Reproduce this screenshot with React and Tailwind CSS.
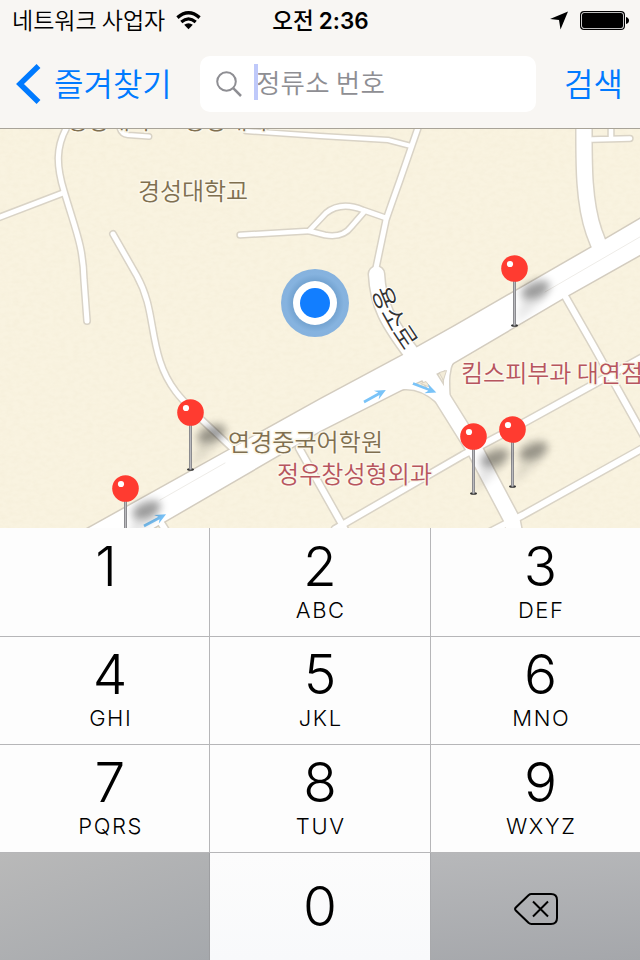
import React from 'react';

const keys = [
  { digit: '1', letters: '' },
  { digit: '2', letters: 'ABC' },
  { digit: '3', letters: 'DEF' },
  { digit: '4', letters: 'GHI' },
  { digit: '5', letters: 'JKL' },
  { digit: '6', letters: 'MNO' },
  { digit: '7', letters: 'PQRS' },
  { digit: '8', letters: 'TUV' },
  { digit: '9', letters: 'WXYZ' },
];

// Road geometry, in screen coordinates
const roads = [
  { d: 'M70 122 C54 146 57 168 64 191 C76 232 83 245 84 280 L87 321', w: 5 },
  { d: 'M-5 219 L63 193', w: 5 },
  { d: 'M119 122 Q119 134 128 135 L149 136.500', w: 4 },
  { d: 'M246 131 L320 136 L388 140 L411 146', w: 4 },
  { d: 'M420 122 L400 180 Q390 208 386 220 L376 268', w: 5 },
  { d: 'M240 235 L309 231 L326 213 Q341 201 363 210 L386 218', w: 4.500 },
  { d: 'M309 231 L325 235 Q343 238 351 227 L364 212', w: 4.500 },
  { d: 'M113 234 L137 276 C153 305 150 330 160 361 C168 386 180 398 202 420 L233 449', w: 5 },
  { d: 'M376.500 274 C378 305 388 322 412 354 L430 378 L475 450 L512 520 L515 535', w: 15 },
  { d: 'M584 120 C584 160 583 200 594 232 L602 253', w: 15 },
  { d: 'M611 120 L611 139 M592 139.500 L630 138.500', w: 4.500 },
  { d: 'M565 296 L593 345 L645 438', w: 6 },
  { d: 'M645 356 L527 421 L463 455 L335 529', w: 6 },
  { d: 'M645 447 L523 515 L490 532', w: 6 },
  { d: 'M299 448 L348 535', w: 6 },
  { d: 'M451 360 C446 370 446 380 447 396', w: 5 },
  { d: 'M395 388 Q418 382 438 400', w: 5 },
  { d: 'M158 518 L168 534', w: 6 },
];

const mainRoad =
  'M80 533 L320 399.500 L405 354 L455 326 L594 246 L645 216 V252 L565 297 L453 363 Q446 371 438 373 L407 387 L320 431 L160 524 L145 533 Z';

const pins = [
  [514.5, 268.5],
  [190.5, 412.5],
  [125.5, 488.5],
  [512.5, 429.5],
  [473.5, 436.5],
];

const arrows = [
  { x: 364, y: 402, r: -29 },
  { x: 413, y: 383.5, r: 21 },
  { x: 144, y: 526, r: -28 },
];

const StatusBar = () => (
  <div className="flex h-10 items-center pr-[11px] pl-3 text-[22.5px] text-black">
    <div className="flex flex-1 items-center">
      <span className="pb-0.5 text-[23px] font-[350] whitespace-nowrap">네트워크 사업자</span>
      <svg className="ml-[11px] h-[19px] w-[25px]" viewBox="0 0 26 19" fill="none" stroke="black">
        <path d="M1.500 6.500 Q13 -3.500 24.500 6.500" strokeWidth="3.500" />
        <path d="M5.500 11 Q13 4.500 20.500 11" strokeWidth="3.300" />
        <path d="M13 18.500 L8.500 14 Q13 10.500 17.500 14 Z" fill="black" stroke="none" />
      </svg>
    </div>
    <div className="font-medium whitespace-nowrap">
      오전 <span className="font-['Inter'] text-[22.5px] font-semibold">2:36</span>
    </div>
    <div className="flex flex-1 items-center justify-end gap-[12px]">
      <svg className="h-[19px] w-[18px]" viewBox="0 0 18 19">
        <path d="M18 0.500 L10.500 18.500 L9 9 L0 8 Z" />
      </svg>
      <svg className="h-[19px] w-[49px]" viewBox="0 0 49 19">
        <rect x="0.600" y="0.600" width="43.800" height="17.800" rx="3.500" fill="white" stroke="black" strokeWidth="1.200" />
        <rect x="2" y="2" width="41" height="15" rx="2" />
        <path d="M46 6 Q49 7 49 9.500 Q49 12 46 13 Z" />
      </svg>
    </div>
  </div>
);

const SearchBar = () => (
  <div className="flex h-[88px] items-start pt-4 text-[#007aff]">
    <button className="flex h-[56px] w-[200px] items-center pl-4">
      <svg className="h-[40px] w-[25px]" viewBox="0 0 25 40" fill="none" stroke="currentColor" strokeWidth="5.500">
        <path d="M22.500 2 L4 20 L22.500 38" />
      </svg>
      <span className="ml-[13px] pb-1 text-[32px] font-[350] whitespace-nowrap">즐겨찾기</span>
    </button>
    <div className="flex h-[56px] w-[336px] items-center rounded-[10px] bg-white pl-4">
      <svg className="h-[26px] w-[26px]" viewBox="0 0 26 26" fill="none" stroke="#8e8e93" strokeWidth="2">
        <circle cx="10.500" cy="10.500" r="9.300" />
        <path d="M17.200 17.200 L25 25" strokeWidth="2.500" />
      </svg>
      <div className="ml-3 h-9 w-1 -translate-y-[2px] bg-[#bfc9fa]" />
      <span className="-ml-0.5 pb-[5px] text-[26.5px] font-[350] tracking-[0.2px] whitespace-nowrap text-[#8e8e93]">정류소 번호</span>
    </div>
    <button className="ml-7 flex h-[56px] items-center pb-1 text-[32px] font-[350] whitespace-nowrap">검색</button>
  </div>
);

const Pin = ({ x, y }) => (
  <g transform={`translate(${x} ${y})`}>
    <path d="M1 56 L10 22 L34 16 L30 30 Z" fill="black" opacity="0.1" filter="url(#soft)" />
    <ellipse cx="21" cy="21" rx="15" ry="8" transform="rotate(-22 21 21)" fill="black" opacity="0.34" filter="url(#soft)" />
    <ellipse cx="0" cy="57" rx="3.500" ry="1.300" fill="#333" />
    <rect x="-1.500" y="12" width="3" height="45" fill="#8b8b8f" />
    <rect x="-0.500" y="12" width="1" height="45" fill="#b9b9bd" />
    <circle r="13.300" fill="#ff3b30" />
    <circle cx="-4.500" cy="-4.500" r="3.100" fill="white" />
  </g>
);

const MapView = () => (
  <svg className="block h-[399px] w-[640px]" viewBox="0 129 640 399">
    <defs>
      <filter id="soft" x="-50%" y="-50%" width="200%" height="200%">
        <feGaussianBlur stdDeviation="4" />
      </filter>
      <filter id="paper" x="0" y="0" width="100%" height="100%" colorInterpolationFilters="sRGB">
        <feTurbulence type="fractalNoise" baseFrequency="0.15 0.25" numOctaves="3" seed="4" />
        <feColorMatrix values="0 0 0 0 0.7  0 0 0 0 0.6  0 0 0 0 0.4  0.5 0 0 0 -0.17" />
      </filter>
      <radialGradient id="halo">
        <stop offset="0.600" stopColor="#6f9fcd" />
        <stop offset="0.850" stopColor="#86b3df" />
        <stop offset="1" stopColor="#86b2de" />
      </radialGradient>
      <path id="yongso" d="M372 291 Q380 318 409 358" />
    </defs>
    <rect y="128" width="640" height="400" fill="#f9f3e0" />
    <rect y="128" width="640" height="400" filter="url(#paper)" opacity="0.13" />

    <g fill="none" strokeLinecap="round" strokeLinejoin="round">
      {roads.map((road) => (
        <path key={road.d} d={road.d} stroke="#d9d3c6" strokeWidth={road.w + 3} />
      ))}
      <path d={mainRoad} stroke="#d3ccbf" strokeWidth="3" />
      {roads.map((road) => (
        <path key={road.d} d={road.d} stroke="white" strokeWidth={road.w} />
      ))}
      <path d={mainRoad} fill="white" />
      <path d="M645 234 L545 292 M225 463 L160 500" stroke="#eeece8" />
      {/* traffic islands at the junction */}
      <path d="M439.500 372.500 L446.500 370.500 L443.500 380 Z M421 383.500 L426 381.500 L430 387 Z" fill="#f3ecd8" stroke="#d9d2c4" />
    </g>

    {arrows.map((a) => (
      <g key={a.x} transform={`translate(${a.x} ${a.y}) rotate(${a.r})`} fill="#79c3f8">
        <path d="M0 -1.300 H17 L14 -5 L25 0 L14 5 L17 1.300 H0 Z" />
      </g>
    ))}

    <g
      className="font-['Noto_Sans_CJK_KR',sans-serif] text-[24px] font-[350]"
      stroke="#fbf7ea"
      strokeWidth="3"
      strokeLinejoin="round"
      paintOrder="stroke"
    >
      <g fill="#7f6f50">
        <text x="66" y="129" textLength="85">경성대학</text>
        <text x="183" y="129" textLength="107">경성대학교</text>
        <text x="138" y="199.500" textLength="110">경성대학교</text>
        <text x="228" y="450.500" textLength="155">연경중국어학원</text>
      </g>
      <g fill="#b7555e">
        <text x="277" y="482.500" textLength="155">정우창성형외과</text>
        <text x="461" y="381.500" textLength="182">킴스피부과 대연점</text>
      </g>
      <text className="text-[25px]" fill="#333" stroke="white" strokeWidth="2">
        <textPath href="#yongso">용소로</textPath>
      </text>
    </g>

    <circle cx="315" cy="303" r="34" fill="url(#halo)" />
    <circle cx="315" cy="303" r="22" fill="white" />
    <circle cx="315" cy="303" r="15" fill="#127eff" />

    {pins.map(([x, y]) => (
      <Pin key={x} x={x} y={y} />
    ))}
  </svg>
);

const Keypad = () => (
  <div className="grid grid-cols-[210px_221px_209px] grid-rows-[109px_108px_108px_107px] font-['Inter',sans-serif] font-light text-black">
    {keys.map((key, i) => (
      <button
        key={key.digit}
        className={`flex flex-col items-center border-b border-[#b6b6b8] bg-[#fdfdfd] ${i < 3 ? 'pt-[10px]' : 'pt-[9px]'} ${i % 3 === 2 ? 'pl-[10px]' : 'border-r'} ${i % 3 === 0 ? 'pl-[11px]' : ''}`}
      >
        <span className={`text-[55px] leading-[56px] ${i === 0 ? '-ml-2' : ''}`}>{key.digit}</span>
        <span className="mt-1 pl-[1.5px] text-[22px] leading-6 tracking-[1.6px]">{key.letters}</span>
      </button>
    ))}
    <div className="border-r border-[#9d9ea1] bg-linear-[160deg] from-[#b9b9b9] to-[#a5a8ac]" />
    <button className="flex justify-center border-r border-[#a8a9ac] bg-linear-to-b from-[#fcfcfc] to-[#f8f9fb] pt-[25px]">
      <span className="text-[55px] leading-[56px]">0</span>
    </button>
    <button className="flex items-center justify-center bg-linear-[175deg] from-[#b7b8ba] to-[#a5a7ab] pt-[4px]">
      <svg className="h-[32px] w-[44px]" viewBox="0 0 44 32" fill="none" stroke="black" strokeWidth="2">
        <path d="M14.500 2.200 Q15.800 1 17.500 1 H37 Q43 1 43 7 V25 Q43 31 37 31 H17.500 Q15.800 31 14.500 29.800 L1.800 17.500 Q0.400 16 1.800 14.500 Z" />
        <path d="M19 8.500 L34 23.500 M34 8.500 L19 23.500" />
      </svg>
    </button>
  </div>
);

const App = () => (
  <div className="h-[960px] w-[640px] overflow-hidden bg-[#f8f6f3] font-['Noto_Sans_CJK_KR',sans-serif]">
    <div className="h-[129px] border-b border-[#a8a398]">
      <StatusBar />
      <SearchBar />
    </div>
    <MapView />
    <Keypad />
  </div>
);

export default App;
